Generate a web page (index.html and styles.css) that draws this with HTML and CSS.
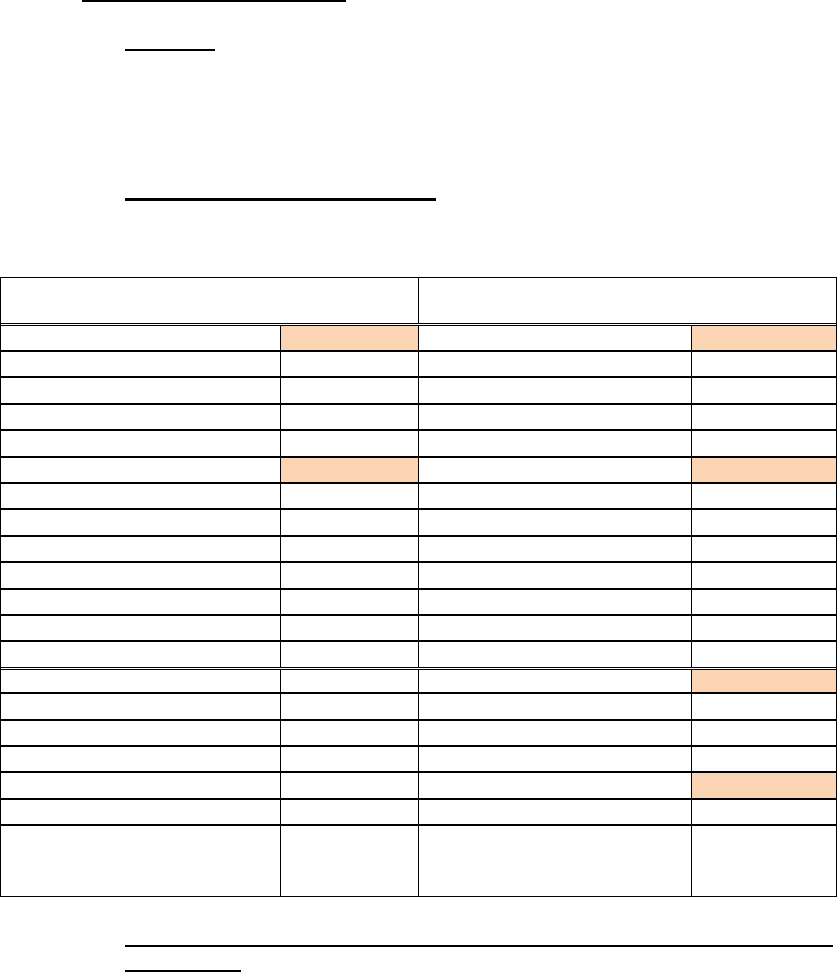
FILE: index.html
```html
<!DOCTYPE html>
<html lang="en">
<head>
<meta charset="utf-8">
<title>Form</title>
<link rel="stylesheet" href="styles.css">
</head>
<body>
<div class="page">
  <div class="rule r1"></div>
  <div class="rule r2"></div>
  <div class="rule r3"></div>

  <div class="table">
    <div class="thead">
      <div class="cell"></div>
      <div class="cell"></div>
    </div>
    <div class="row first"><div class="cell"></div><div class="cell hl"></div><div class="cell"></div><div class="cell hl"></div></div>
    <div class="row"><div class="cell"></div><div class="cell"></div><div class="cell"></div><div class="cell"></div></div>
    <div class="row"><div class="cell"></div><div class="cell"></div><div class="cell"></div><div class="cell"></div></div>
    <div class="row"><div class="cell"></div><div class="cell"></div><div class="cell"></div><div class="cell"></div></div>
    <div class="row"><div class="cell"></div><div class="cell"></div><div class="cell"></div><div class="cell"></div></div>
    <div class="row"><div class="cell"></div><div class="cell hl"></div><div class="cell"></div><div class="cell hl"></div></div>
    <div class="row"><div class="cell"></div><div class="cell"></div><div class="cell"></div><div class="cell"></div></div>
    <div class="row"><div class="cell"></div><div class="cell"></div><div class="cell"></div><div class="cell"></div></div>
    <div class="row"><div class="cell"></div><div class="cell"></div><div class="cell"></div><div class="cell"></div></div>
    <div class="row"><div class="cell"></div><div class="cell"></div><div class="cell"></div><div class="cell"></div></div>
    <div class="row"><div class="cell"></div><div class="cell"></div><div class="cell"></div><div class="cell"></div></div>
    <div class="row"><div class="cell"></div><div class="cell"></div><div class="cell"></div><div class="cell"></div></div>
    <div class="row dbl"><div class="cell"></div><div class="cell"></div><div class="cell"></div><div class="cell"></div></div>
    <div class="row after"><div class="cell"></div><div class="cell"></div><div class="cell"></div><div class="cell hl"></div></div>
    <div class="row"><div class="cell"></div><div class="cell"></div><div class="cell"></div><div class="cell"></div></div>
    <div class="row"><div class="cell"></div><div class="cell"></div><div class="cell"></div><div class="cell"></div></div>
    <div class="row"><div class="cell"></div><div class="cell"></div><div class="cell"></div><div class="cell"></div></div>
    <div class="row"><div class="cell"></div><div class="cell"></div><div class="cell"></div><div class="cell hl"></div></div>
    <div class="row"><div class="cell"></div><div class="cell"></div><div class="cell"></div><div class="cell"></div></div>
    <div class="row tall"><div class="cell"></div><div class="cell"></div><div class="cell"></div><div class="cell"></div></div>
  </div>

  <div class="rule r4"></div>
  <div class="rule r5"></div>
</div>
</body>
</html>
```

FILE: styles.css
```css
html, body {
  margin: 0;
  padding: 0;
  background: #ffffff;
  font-family: "Liberation Sans", Arial, sans-serif;
}

.page {
  width: 837px;
  height: 972px;
  overflow: hidden;
}

.rule {
  height: 2px;
  background: #000000;
}

.r1 { margin-left: 82px; width: 264px; }
.r2 { margin: 47px 0 0 125px; width: 90px; }
.r3 { margin: 147px 0 0 125px; width: 311px; height: 3px; }
.r4 { margin: 48px 0 0 125px; width: 708px; }
.r5 { margin: 23px 0 0 125px; width: 116px; }

.table {
  margin-top: 76px;
  width: 837px;
  box-sizing: border-box;
  border-left: 1px solid #000000;
  border-right: 1px solid #000000;
}

.thead {
  display: grid;
  grid-template-columns: 417px 1fr;
  height: 49px;
  box-sizing: border-box;
  border-top: 1px solid #000000;
  border-bottom: 3px double #000000;
}

.thead .cell + .cell {
  border-left: 1px solid #000000;
}

.row {
  display: grid;
  grid-template-columns: 279px 138px 273px 1fr;
  height: 26.4px;
  box-sizing: border-box;
  border-bottom: 2px solid #000000;
}

.row.first { height: 26px; }
.row.dbl { height: 27.3px; border-bottom: 3px double #000000; }
.row.after { height: 24.6px; }
.row.tall { height: 71px; border-bottom: 1px solid #000000; }

.cell {
  box-sizing: border-box;
}

.row .cell + .cell {
  border-left: 1px solid #000000;
}

.cell.hl {
  background: #fbd4b4;
}
```
